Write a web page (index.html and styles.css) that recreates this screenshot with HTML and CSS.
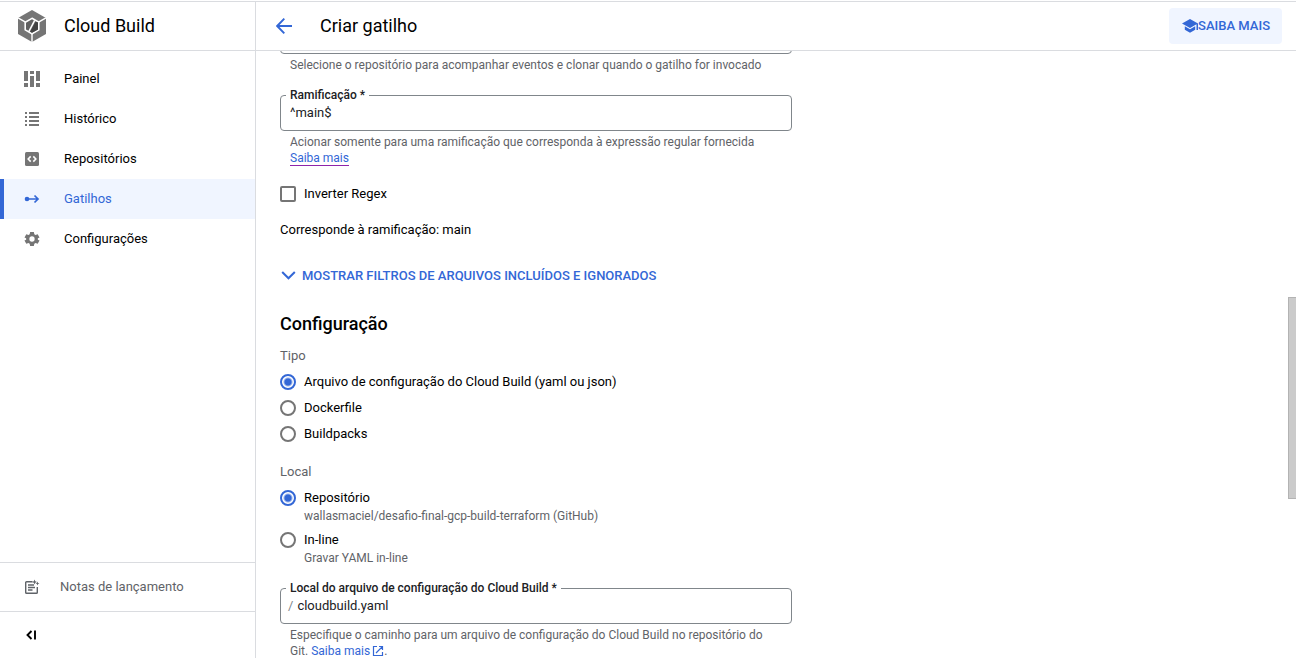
FILE: index.html
```html
<!DOCTYPE html>
<html lang="pt-BR">
<head>
<meta charset="utf-8">
<meta name="viewport" content="width=device-width, initial-scale=1">
<title>Criar gatilho – Cloud Build</title>
<link rel="stylesheet" href="styles.css">
</head>
<body>
<div class="app">
  <aside class="sidebar">
    <div class="brand">
      <svg class="brand-logo" viewBox="0 0 32 34" aria-hidden="true">
        <path fill="#757575" d="M16 1l14 8v16l-14 8-14-8V9z"/>
        <path d="M2 8.800l7.500 4.400M30 8.800l-7.500 4.400M16 24v9.500" stroke="#fff" stroke-width="1.400"/>
        <path fill="#616161" stroke="#fff" stroke-width="1.600" d="M16 9.300l6.800 3.900v7.700L16 24.800l-6.800-3.900v-7.700z"/>
        <path fill="#424242" d="M19.800 12.400l2.200 1.200v6.800l-6 3.400-1.800-1z"/>
        <path d="M18.700 11.300 12.800 22.600" stroke="#fff" stroke-width="1.500"/>
      </svg>
      <span class="brand-name">Cloud Build</span>
    </div>
    <nav class="nav">
      <a class="nav-item" href="#">
        <svg class="icon" viewBox="0 0 16 16" aria-hidden="true"><path fill="currentColor" d="M0 0h4v10H0zM0 12h4v4H0zM6 0h4v3H6zM6 5h4v11H6zM12 0h4v10h-4zM12 12h4v4h-4z"/></svg>
        <span>Painel</span>
      </a>
      <a class="nav-item" href="#">
        <svg class="icon" viewBox="0 0 16 16" aria-hidden="true"><path fill="currentColor" d="M1 1h2v2H1zM5 1h10v2H5zM1 5h2v2H1zM5 5h10v2H5zM1 9h2v2H1zM5 9h10v2H5zM1 13h2v2H1zM5 13h10v2H5z"/></svg>
        <span>Histórico</span>
      </a>
      <a class="nav-item" href="#">
        <svg class="icon" viewBox="0 0 16 16" aria-hidden="true"><rect x="1" y="1" width="14" height="14" rx="1.500" fill="currentColor"/><path d="M6.700 5.400 4.200 8l2.500 2.600M9.300 5.400 11.800 8l-2.500 2.600" fill="none" stroke="#fff" stroke-width="1.600"/></svg>
        <span>Repositórios</span>
      </a>
      <a class="nav-item nav-item-active" href="#" aria-current="page">
        <svg class="icon" viewBox="0 0 16 16" aria-hidden="true"><circle cx="3" cy="8" r="2.300" fill="currentColor"/><path d="M3 8h11M10.500 4.500 14 8l-3.500 3.500" fill="none" stroke="currentColor" stroke-width="1.700"/></svg>
        <span>Gatilhos</span>
      </a>
      <a class="nav-item" href="#">
        <svg class="icon" viewBox="2 2.300 20 20" aria-hidden="true"><path fill="currentColor" fill-rule="evenodd" d="M9.700 3.500h4.600l.6 2.800 1.500.9 2.700-.9 2.300 4-2.100 1.200v1.600l2.100 1.200-2.300 4-2.700-.9-1.500.9-.6 2.800H9.700l-.6-2.800-1.500-.9-2.700.9-2.300-4 2.100-1.200v-1.600l-2.100-1.200 2.300-4 2.700.9 1.500-.9zM12 9a3.300 3.300 0 1 0 0 6.600A3.300 3.300 0 0 0 12 9z"/></svg>
        <span>Configurações</span>
      </a>
    </nav>
    <a class="release-notes" href="#">
      <svg class="icon" viewBox="0 0 16 16" aria-hidden="true"><path d="M8.500 2.700H2.600q-.9 0-.9.900v9.800q0 .9.900.9h9.800q.9 0 .9-.9V8" fill="none" stroke="currentColor" stroke-width="1.400"/><path d="M4 6h6M4 8.500h7M4 11h4.500" stroke="currentColor" stroke-width="1.300"/><path fill="currentColor" d="m10.500.5.700 1.800 1.800.7-1.800.7-.7 1.800-.7-1.800L8 3l1.800-.7zM13.500 2.500l.6 1.400 1.400.6-1.400.6-.6 1.400-.6-1.400-1.400-.6 1.400-.6z"/></svg>
      <span>Notas de lançamento</span>
    </a>
    <div class="collapse">
      <button class="icon-button" type="button" aria-label="Recolher menu">
        <svg class="icon" viewBox="0 0 16 16" aria-hidden="true"><path d="M7.500 4 3.500 8l4 4M11 3.500v9" fill="none" stroke="currentColor" stroke-width="1.900"/></svg>
      </button>
    </div>
  </aside>

  <main class="main">
    <header class="toolbar">
      <button class="icon-button back" type="button" aria-label="Voltar">
        <svg class="icon" viewBox="0 0 16 16" aria-hidden="true"><path d="M8.300.700 1.200 8l7.100 7.300M1.200 8H16" fill="none" stroke="currentColor" stroke-width="1.900"/></svg>
      </button>
      <h1 class="title">Criar gatilho</h1>
      <button class="learn" type="button">
        <svg class="icon" viewBox="0 0 16 16" aria-hidden="true"><path fill="currentColor" d="M8 1l8 4.400V12h-1.500V6.300L8 10 0 5.400zM2.800 8.300 8 11.300l5.200-3v3.400L8 14.800l-5.200-3.100z"/></svg>
        <span>SAIBA MAIS</span>
      </button>
    </header>

    <div class="viewport">
      <form class="form">
        <select class="select" aria-label="Repositório" aria-describedby="repo-hint"><option></option></select>
        <p class="hint" id="repo-hint">Selecione o repositório para acompanhar eventos e clonar quando o gatilho for invocado</p>

        <fieldset class="field">
          <legend><label for="branch">Ramificação *</label></legend>
          <input class="field-input" id="branch" type="text" value="^main$">
        </fieldset>
        <p class="hint">Acionar somente para uma ramificação que corresponda à expressão regular fornecida <a class="link link-underlined" href="#">Saiba mais</a></p>

        <label class="option invert"><input class="checkbox" type="checkbox"><span>Inverter Regex</span></label>
        <p class="matches">Corresponde à ramificação: main</p>

        <button class="expand" type="button">
          <svg class="icon" viewBox="0 0 16 16" aria-hidden="true"><path d="M2.200 4 8.500 10.300 14.800 4" fill="none" stroke="currentColor" stroke-width="2"/></svg>
          <span>MOSTRAR FILTROS DE ARQUIVOS INCLUÍDOS E IGNORADOS</span>
        </button>

        <h2 class="section-title">Configuração</h2>

        <div class="group" role="radiogroup" aria-labelledby="type-label">
          <div class="group-label" id="type-label">Tipo</div>
          <label class="option"><input class="radio" type="radio" name="type" checked><span>Arquivo de configuração do Cloud Build (yaml ou json)</span></label>
          <label class="option"><input class="radio" type="radio" name="type"><span>Dockerfile</span></label>
          <label class="option"><input class="radio" type="radio" name="type"><span>Buildpacks</span></label>
        </div>

        <div class="group group-described" role="radiogroup" aria-labelledby="place-label">
          <div class="group-label" id="place-label">Local</div>
          <label class="option"><input class="radio" type="radio" name="place" checked><span>Repositório<small class="option-note">wallasmaciel/desafio-final-gcp-build-terraform (GitHub)</small></span></label>
          <label class="option"><input class="radio" type="radio" name="place"><span>In-line<small class="option-note">Gravar YAML in-line</small></span></label>
        </div>

        <fieldset class="field">
          <legend><label for="path">Local do arquivo de configuração do Cloud Build *</label></legend>
          <span class="prefix">/</span>
          <input class="field-input" id="path" type="text" value="cloudbuild.yaml">
        </fieldset>
        <p class="hint">Especifique o caminho para um arquivo de configuração do Cloud Build no repositório do Git. <a class="link" href="#">Saiba mais<svg class="external" viewBox="0 0 12 12" aria-hidden="true"><path d="M5 1.500H1.500v9h9V7M7 1.500h3.500V5M10.500 1.500 4 8" fill="none" stroke="currentColor" stroke-width="1.200"/></svg></a>.</p>
      </form>
      <div class="scroll-thumb"></div>
    </div>
  </main>
</div>
</body>
</html>
```

FILE: styles.css
```css
* {
  box-sizing: border-box;
}

body {
  margin: 0;
  padding-top: 1px;
  overflow: hidden;
  font: 13px/20px Roboto, Arial, sans-serif;
  color: #000;
  background: #fff;
}

button,
input,
select {
  font: inherit;
  color: inherit;
}

a {
  text-decoration: none;
}

h1,
h2,
p {
  margin: 0;
}

.app {
  display: flex;
  height: calc(100vh - 1px);
  border-top: 1px solid #dadce0;
}

.icon {
  width: 16px;
  height: 16px;
  flex: none;
  display: block;
}

.icon-button {
  padding: 0;
  border: 0;
  background: none;
}

/* Sidebar */

.sidebar {
  display: flex;
  flex-direction: column;
  flex: none;
  width: 256px;
  border-right: 1px solid #dadce0;
}

.brand {
  display: flex;
  align-items: center;
  gap: 16px;
  flex: none;
  height: 49px;
  padding-left: 16px;
  border-bottom: 1px solid #dadce0;
}

.brand-logo {
  width: 32px;
  height: 34px;
}

.brand-name {
  font-size: 18px;
  line-height: 24px;
}

.nav {
  flex: 1;
  padding-top: 8px;
}

.nav-item {
  display: flex;
  align-items: center;
  gap: 24px;
  height: 40px;
  padding-left: 20px;
  border-left: 4px solid transparent;
  color: #000;
}

.nav-item .icon {
  color: #757575;
}

.nav-item-active {
  border-left-color: #3367d6;
  background: #f0f5ff;
}

.nav-item-active,
.nav-item-active .icon {
  color: #3367d6;
}

.release-notes {
  display: flex;
  align-items: center;
  gap: 20px;
  height: 49px;
  padding-left: 24px;
  border-top: 1px solid #dadce0;
  color: #5f6368;
}

.collapse {
  display: flex;
  align-items: center;
  height: 47px;
  padding-left: 24px;
  border-top: 1px solid #dadce0;
}

/* Main column */

.main {
  display: flex;
  flex-direction: column;
  flex: 1;
  min-width: 0;
}

.toolbar {
  display: flex;
  align-items: center;
  flex: none;
  height: 49px;
  padding: 0 14px 0 20px;
  border-bottom: 1px solid #dadce0;
}

.back {
  color: #3367d6;
}

.title {
  flex: 1;
  margin-left: 28px;
  font-size: 18px;
  font-weight: 400;
  line-height: 24px;
}

.learn {
  display: flex;
  align-items: center;
  height: 36px;
  padding: 0 12px 0 13px;
  border: 0;
  border-radius: 4px;
  background: #f0f5ff;
  color: #3367d6;
  font-weight: 500;
}

.viewport {
  position: relative;
  flex: 1;
  min-height: 0;
  overflow: hidden;
}

.scroll-thumb {
  position: absolute;
  top: 246px;
  right: 0;
  width: 8px;
  height: 202px;
  border: 1px solid #b3b3b3;
  border-right: 0;
  background: #cbcbcb;
}

/* Form, scrolled so that the repository field is mostly out of view */

.form {
  display: flex;
  flex-direction: column;
  align-items: flex-start;
  width: 536px;
  max-width: 100%;
  margin-top: -33px;
  padding-left: 24px;
}

.select {
  width: 100%;
  height: 36px;
  border: 1px solid #80868b;
  border-radius: 4px;
  background: #fff;
  appearance: none;
}

.hint {
  padding: 3px 16px 0 10px;
  font-size: 12px;
  line-height: 16px;
  color: #5f6368;
}

.link {
  color: #3367d6;
}

.link-underlined {
  border-bottom: 1px solid #8e24aa;
}

.external {
  width: 12px;
  height: 12px;
  margin-left: 2px;
  vertical-align: -2px;
}

.field {
  display: flex;
  width: 100%;
  min-width: 0;
  margin: 14px 0 0;
  padding: 0 8px 7px 5px;
  border: 1px solid #80868b;
  border-radius: 4px;
}

.field legend {
  padding: 0 4px;
  font-size: 12px;
  font-weight: 500;
  line-height: 16px;
  color: #202124;
}

.field-input {
  flex: 1;
  min-width: 0;
  height: 20px;
  padding: 0 0 0 4px;
  border: 0;
  outline: 0;
  background: none;
  color: #202124;
}

.prefix {
  padding-left: 2px;
  color: #80868b;
}

.option {
  display: flex;
  align-items: flex-start;
  gap: 8px;
}

.checkbox,
.radio {
  appearance: none;
  flex: none;
  width: 16px;
  height: 16px;
  margin: 2px 0 0;
  border: 2px solid #757575;
  background: #fff;
}

.checkbox {
  border-radius: 2px;
}

.radio {
  border-radius: 50%;
}

.radio:checked {
  border-color: #3367d6;
  background: radial-gradient(circle, #3367d6 0 3px, #fff 5px);
}

.invert {
  margin-top: 18px;
}

.matches {
  margin-top: 16px;
}

.expand {
  display: flex;
  align-items: center;
  gap: 6px;
  margin-top: 26px;
  padding: 0;
  border: 0;
  background: none;
  color: #3367d6;
  font-weight: 500;
}

.section-title {
  margin-top: 26px;
  font-size: 18px;
  font-weight: 500;
  line-height: 24px;
}

.group {
  display: flex;
  flex-direction: column;
  gap: 6px;
  margin-top: 10px;
}

.group-label {
  color: #5f6368;
}

.group-described {
  margin-top: 18px;
}

.option-note {
  display: block;
  font-size: 12px;
  line-height: 16px;
  color: #5f6368;
}
```
